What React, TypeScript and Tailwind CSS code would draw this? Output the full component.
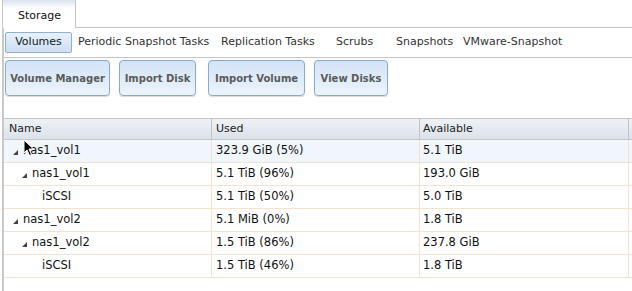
import React from "react"

interface Row {
    name: string
    level: number
    expandable: boolean
    used: string
    available: string
}

const rows: Row[] = [
    { name: "nas1_vol1", level: 0, expandable: true, used: "323.9 GiB (5%)", available: "5.1 TiB" },
    { name: "nas1_vol1", level: 1, expandable: true, used: "5.1 TiB (96%)", available: "193.0 GiB" },
    { name: "iSCSI", level: 2, expandable: false, used: "5.1 TiB (50%)", available: "5.0 TiB" },
    { name: "nas1_vol2", level: 0, expandable: true, used: "5.1 MiB (0%)", available: "1.8 TiB" },
    { name: "nas1_vol2", level: 1, expandable: true, used: "1.5 TiB (86%)", available: "237.8 GiB" },
    { name: "iSCSI", level: 2, expandable: false, used: "1.5 TiB (46%)", available: "1.8 TiB" },
]

const indent = ["pl-[9px]", "pl-[18px]", "pl-[38px]"]

function Expando() {
    return (
        <svg width="5" height="5" viewBox="0 0 5 5" className="mr-[5px] mt-[2px] shrink-0">
            <polygon points="5,0 5,5 0,5" fill="#444" />
        </svg>
    )
}

function Cursor() {
    return (
        <svg width="12" height="18" viewBox="0 0 12 18" className="absolute left-[23px] top-[139px]">
            <path d="M1 1 L1 14 L4 11 L6.5 16.5 L8.5 15.5 L6 10 L10.5 10 Z" fill="#000" stroke="#fff" strokeWidth="1" />
        </svg>
    )
}

const tabs = [
    { label: "Periodic Snapshot Tasks", w: "w-[143px]" },
    { label: "Replication Tasks", w: "w-[115px]" },
    { label: "Scrubs", w: "w-[60px]" },
    { label: "Snapshots", w: "w-[67px]" },
    { label: "VMware-Snapshot", w: "w-[120px]" },
]

const buttons = [
    { label: "Volume Manager", cls: "ml-[1px] w-[105px]" },
    { label: "Import Disk", cls: "ml-[9px] w-[77px]" },
    { label: "Import Volume", cls: "ml-[12px] w-[97px]" },
    { label: "View Disks", cls: "ml-[9px] w-[74px]" },
]

function App() {
    return (
        <div className="relative w-[632px] h-[291px] overflow-hidden bg-white text-[11px] text-[#222] font-['DejaVu_Sans',Verdana,sans-serif]">
            <div className="flex h-[28px]">
                <div className="ml-[2px] w-[74px] border-x border-[#c4c4c4] bg-gradient-to-b from-[#d9e3ee] via-white via-30% to-white flex items-center pl-[15px] pt-[4px] text-[#111]">
                    Storage
                </div>
                <div className="flex-1 border-b border-[#c4c4c4]" />
            </div>

            <div className="ml-[2px] h-[263px] border-l-2 border-[#c9c9c9]">
                <div className="flex items-center h-[30px] border-b border-[#c4c4c4]">
                    <div className="ml-[1px] w-[67px] h-[21px] rounded-[2px] border border-[#94aece] bg-gradient-to-b from-[#e8f1fc] to-[#cddff3] flex items-center justify-center text-[#122]">
                        Volumes
                    </div>
                    <div className="ml-[6px] flex text-[#333]">
                        {tabs.map(t => (
                            <div key={t.label} className={t.w + " whitespace-nowrap"}>{t.label}</div>
                        ))}
                    </div>
                </div>

                <div className="flex mt-[2px]">
                    {buttons.map(b => (
                        <div
                            key={b.label}
                            className={b.cls + " h-[36px] rounded-[4px] border border-[#8ea8c7] bg-gradient-to-b from-[#d3e3f6] to-[#ecf4fd] shadow-[0_1px_1px_rgba(0,0,0,0.15)] flex items-center justify-center font-bold text-[10px] text-[#5a5a5a] whitespace-nowrap"}
                        >
                            {b.label}
                        </div>
                    ))}
                </div>

                <div className="mt-[22px] border-t border-[#c6c6c6]">
                    <div className="flex h-[21px] border-b border-[#c6c6c6] bg-gradient-to-b from-[#eef2f6] to-[#dbe2ea] text-[#222]">
                        <div className="w-[208px] pl-[5px] flex items-center border-r border-[#c2c2c2]">Name</div>
                        <div className="w-[208px] pl-[4px] flex items-center border-r border-[#c2c2c2]">Used</div>
                        <div className="w-[209px] pl-[3px] flex items-center border-r border-[#c2c2c2]">Available</div>
                        <div className="flex-1" />
                    </div>
                    {rows.map((r, i) => (
                        <div
                            key={i}
                            className={(i === 0 ? "bg-[#f1f5fc] " : "bg-white ") + "flex h-[23px] border-b border-[#f3e2d0] text-[11.5px] text-[#111]"}
                        >
                            <div className={indent[r.level] + " w-[208px] flex items-center border-r border-[#f3e2d0]"}>
                                {r.expandable && <Expando />}
                                {r.name}
                            </div>
                            <div className="w-[208px] pl-[4px] flex items-center border-r border-[#f3e2d0]">{r.used}</div>
                            <div className="w-[209px] pl-[3px] flex items-center border-r border-[#f3e2d0]">{r.available}</div>
                            <div className="flex-1" />
                        </div>
                    ))}
                </div>
            </div>
            <Cursor />
        </div>
    )
}

export default App
